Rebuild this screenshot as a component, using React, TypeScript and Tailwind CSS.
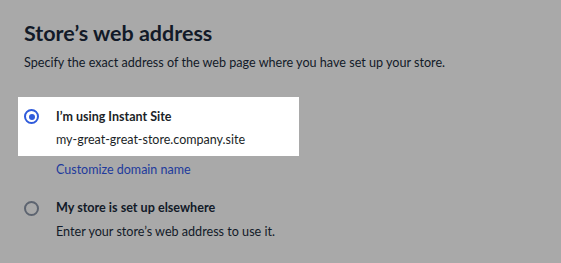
export default function App() {
  return (
    <div className="w-[561px] h-[263px] bg-[#a9a9a9] font-['Lato',sans-serif] text-[#121a28] pl-6 pt-[19px] overflow-hidden">
      <h1 className="text-[21.5px] leading-[28px] font-bold">Store’s web address</h1>
      <p className="mt-[6px] text-[12.6px] leading-5">
        Specify the exact address of the web page where you have set up your store.
      </p>

      <div className="mt-6 -ml-1.5 w-[281px] h-[59px] bg-white pl-1.5 pt-[10px] flex gap-[17px]">
        <span className="mt-[2px] w-[15px] h-[15px] rounded-full border-2 border-[#2f5bdb] flex items-center justify-center shrink-0">
          <span className="w-[6px] h-[6px] rounded-full bg-[#2f5bdb]"></span>
        </span>
        <div className="flex flex-col text-[12.5px] leading-5 text-[#1b1f27]">
          <span className="font-bold">I’m using Instant Site</span>
          <span className="mt-[3px]">my-great-great-store.company.site</span>
        </div>
      </div>

      <a href="#" className="block mt-1 ml-8 text-[12.5px] leading-5 text-[#213a9c]">
        Customize domain name
      </a>

      <div className="mt-[18px] flex gap-[17px]">
        <span className="mt-[3px] w-[15px] h-[15px] rounded-full border-2 border-[#5d6470] shrink-0"></span>
        <div className="flex flex-col text-[12.6px] leading-5">
          <span className="font-bold">My store is set up elsewhere</span>
          <span className="mt-1">Enter your store’s web address to use it.</span>
        </div>
      </div>
    </div>
  );
}
